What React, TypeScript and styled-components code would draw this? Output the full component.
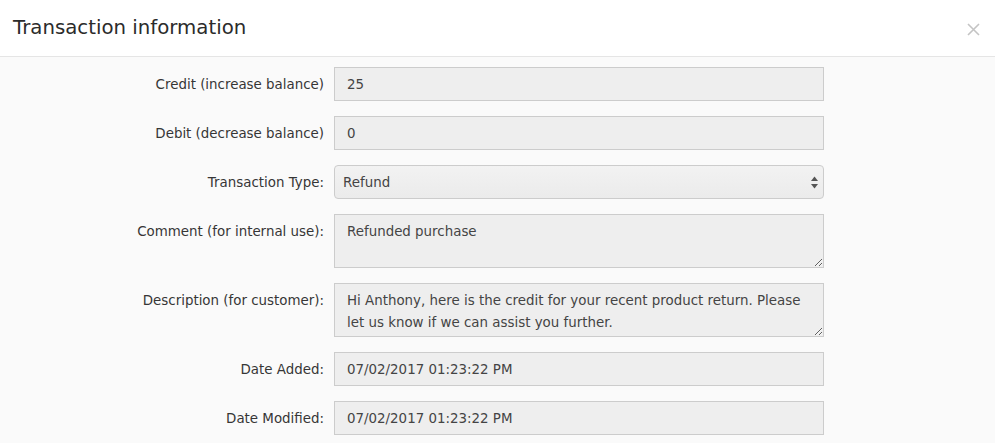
import React from "react";
import styled, { createGlobalStyle } from "styled-components";

const Global = createGlobalStyle`
  html, body { margin: 0; padding: 0; background: #fafafa; }
  body { font-family: "DejaVu Sans", Verdana, sans-serif; color: #333; }
  * { box-sizing: border-box; }
`;

const Modal = styled.div`
  width: 995px;
  height: 443px;
  overflow: hidden;
  background: #fafafa;
`;

const Header = styled.div`
  height: 57px;
  background: #fff;
  border-bottom: 1px solid #e5e5e5;
  display: flex;
  align-items: center;
  justify-content: space-between;
  padding: 0 14px 0 13px;
`;

const Title = styled.h4`
  margin: 0;
  font-size: 19.75px;
  font-weight: normal;
  color: #2b2b2b;
  padding-bottom: 2px;
`;

const Close = styled.button`
  border: 0;
  background: transparent;
  padding: 0;
  width: 16px;
  height: 16px;
  display: flex;
  align-items: center;
  justify-content: center;
  cursor: pointer;
  margin-top: 2px;
`;

const Body = styled.div`
  padding-top: 10px;
`;

const Form = styled.div`
  display: grid;
  grid-template-columns: 324px 490px;
  column-gap: 10px;
  row-gap: 15px;
`;

const Label = styled.label`
  text-align: right;
  font-size: 13.4px;
  line-height: 20px;
  color: #363636;
  padding-top: 8px;
  white-space: nowrap;
`;

const fieldBase = `
  width: 490px;
  background: #eeeeee;
  border: 1px solid #cccccc;
  font-family: "DejaVu Sans", Verdana, sans-serif;
  font-size: 13.4px;
  color: #444;
  outline: none;
  margin: 0;
`;

const Input = styled.input`
  ${fieldBase}
  height: 34px;
  padding: 0 12px;
`;

const TextArea = styled.textarea`
  ${fieldBase}
  height: 54px;
  padding: 6px 12px;
  line-height: 22px;
  resize: vertical;
  overflow: hidden;
  display: block;
`;

const SelectWrap = styled.div`
  position: relative;
  width: 490px;
  height: 34px;
`;

const Select = styled.select`
  ${fieldBase}
  height: 34px;
  border-radius: 4px;
  padding: 0 8px;
  appearance: none;
  -webkit-appearance: none;
  background: linear-gradient(#f2f2f2, #ebebeb);
`;

const Arrows = styled.svg`
  position: absolute;
  right: 5px;
  top: 11px;
  pointer-events: none;
`;

type Row = { label: string; kind: "input" | "textarea" | "select"; value: string };

const rows: Row[] = [
  { label: "Credit (increase balance)", kind: "input", value: "25" },
  { label: "Debit (decrease balance)", kind: "input", value: "0" },
  { label: "Transaction Type:", kind: "select", value: "Refund" },
  { label: "Comment (for internal use):", kind: "textarea", value: "Refunded purchase" },
  {
    label: "Description (for customer):",
    kind: "textarea",
    value:
      "Hi Anthony, here is the credit for your recent product return. Please let us know if we can assist you further.",
  },
  { label: "Date Added:", kind: "input", value: "07/02/2017 01:23:22 PM" },
  { label: "Date Modified:", kind: "input", value: "07/02/2017 01:23:22 PM" },
];

export default function App() {
  return (
    <Modal>
      <Global />
      <Header>
        <Title>Transaction information</Title>
        <Close aria-label="Close">
          <svg width="13" height="13" viewBox="0 0 13 13">
            <path d="M1 1 L12 12 M12 1 L1 12" stroke="#c4c4c4" strokeWidth="1.6" />
          </svg>
        </Close>
      </Header>
      <Body>
        <Form>
          {rows.map((r, i) => (
            <React.Fragment key={i}>
              <Label>{r.label}</Label>
              {r.kind === "input" && <Input readOnly value={r.value} />}
              {r.kind === "textarea" && <TextArea readOnly value={r.value} />}
              {r.kind === "select" && (
                <SelectWrap>
                  <Select value={r.value} onChange={() => {}}>
                    <option>Refund</option>
                  </Select>
                  <Arrows width="9" height="13" viewBox="0 0 9 13">
                    <path d="M4.5 0.5 L8 5 L1 5 Z" fill="#555" />
                    <path d="M4.5 12.5 L8 8 L1 8 Z" fill="#555" />
                  </Arrows>
                </SelectWrap>
              )}
            </React.Fragment>
          ))}
        </Form>
      </Body>
    </Modal>
  );
}
